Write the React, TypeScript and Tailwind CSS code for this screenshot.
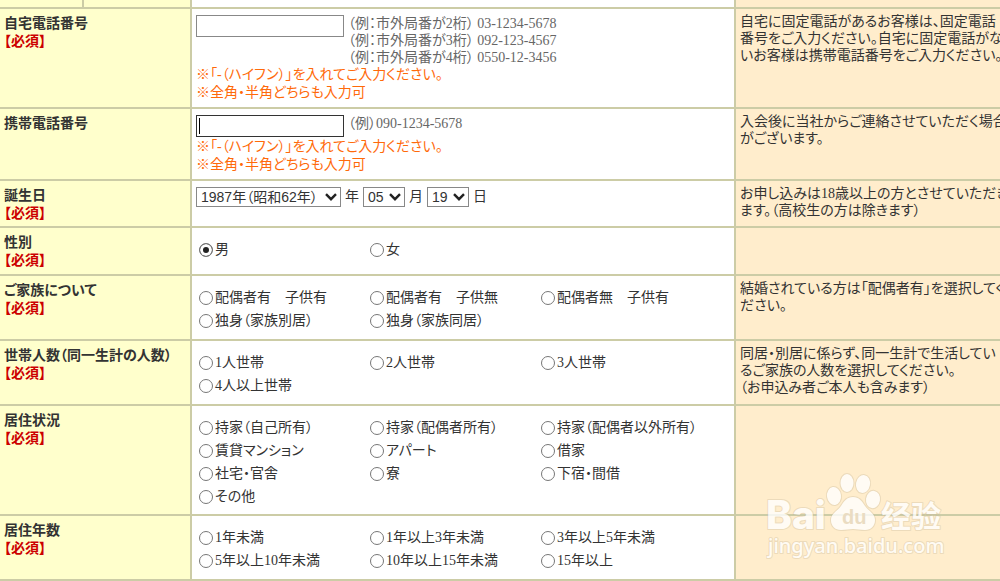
import React from "react";

interface FormRowProps {
  id: string;
  title: string;
  htmlFor?: string;
  required?: boolean;
  height: string;
  note?: string[];
  children: React.ReactNode;
}

interface RadioGroupProps {
  name: string;
  options: string[];
  defaultOption?: string;
}

interface DateSelectProps {
  id: string;
  unit: string;
  value: string;
  width: string;
}

const FAMILY = ["配偶者有　子供有", "配偶者有　子供無", "配偶者無　子供有", "独身（家族別居）", "独身（家族同居）"];

const HOUSEHOLD = ["1人世帯", "2人世帯", "3人世帯", "4人以上世帯"];

const RESIDENCE = [
  "持家（自己所有）",
  "持家（配偶者所有）",
  "持家（配偶者以外所有）",
  "賃貸マンション",
  "アパート",
  "借家",
  "社宅・官舎",
  "寮",
  "下宿・間借",
  "その他",
];

const YEARS = [
  "1年未満",
  "1年以上3年未満",
  "3年以上5年未満",
  "5年以上10年未満",
  "10年以上15年未満",
  "15年以上",
];

const ROW = "grid grid-cols-[192px_minmax(0,1fr)_264px] border-b-2 border-[#cccca6]";

function FormRow({ id, title, htmlFor, required, height, note = [], children }: FormRowProps) {
  return (
    <div className={`${ROW} ${height}`}>
      <div className="border-r-2 border-[#cccca6] bg-[#ffffcc] px-1 pt-1.5 font-bold leading-[18px]">
        <label id={`${id}-label`} htmlFor={htmlFor} className="block">
          {title}
        </label>
        {required && <p className="text-[#cc0000]">【必須】</p>}
      </div>
      <div className="border-r-2 border-[#cccca6] bg-white">{children}</div>
      <div className="overflow-hidden whitespace-nowrap bg-[#ffedcc] px-1 pt-1 leading-[17px]">
        {note.map((line) => (
          <p key={line}>{line}</p>
        ))}
      </div>
    </div>
  );
}

function PhoneHint() {
  return (
    <div className="leading-[18px] text-[#ff6a0a]">
      <p>※「-（ハイフン）」を入れてご入力ください。</p>
      <p>※全角・半角どちらも入力可</p>
    </div>
  );
}

function RadioGroup({ name, options, defaultOption }: RadioGroupProps) {
  return (
    <div
      role="radiogroup"
      aria-labelledby={`${name}-label`}
      className="grid grid-cols-[171px_171px_minmax(0,1fr)] pl-[7px] pt-[10px]"
    >
      {options.map((option) => (
        <label key={option} className="flex h-[23px] items-center gap-0.5 whitespace-nowrap">
          <input
            type="radio"
            name={name}
            defaultChecked={option === defaultOption}
            className="h-3.5 w-3.5 shrink-0 appearance-none rounded-full border border-[#777] bg-white checked:bg-[#222] checked:shadow-[inset_0_0_0_3px_#fff]"
          />
          {option}
        </label>
      ))}
    </div>
  );
}

function DateSelect({ id, unit, value, width }: DateSelectProps) {
  return (
    <>
      <div className={`relative ${width}`}>
        <select
          id={id}
          defaultValue={value}
          className="block h-5 w-full appearance-none border border-[#888] bg-white pl-1 font-['Liberation_Sans','Noto_Sans_CJK_JP',sans-serif] text-sm leading-4"
        >
          <option>{value}</option>
        </select>
        <svg
          viewBox="0 0 12 8"
          className="pointer-events-none absolute right-1 top-1.5 h-2 w-3"
          fill="none"
          stroke="#222"
          strokeWidth="2.4"
        >
          <path d="M1 1.2 6 6.2l5-5" />
        </svg>
      </div>
      <label htmlFor={id}>{unit}</label>
    </>
  );
}

function Watermark() {
  return (
    <svg
      viewBox="0 0 182 92"
      className="pointer-events-none absolute right-[52px] top-[472px] h-[92px] w-[182px]"
      aria-hidden="true"
    >
      <g fill="#fff" stroke="#c4b396" strokeOpacity="0.4" strokeWidth="2" strokeLinejoin="round" paintOrder="stroke" opacity="0.8">
        <text x="0" y="57" fontFamily="Inter, sans-serif" fontWeight="800" fontSize="39">
          Bai
        </text>
        <ellipse cx="68" cy="24" rx="7" ry="9" transform="rotate(-8 68 24)" />
        <ellipse cx="81" cy="11" rx="6.5" ry="9" />
        <ellipse cx="97" cy="12" rx="7" ry="9" transform="rotate(10 97 12)" />
        <ellipse cx="107" cy="27.5" rx="7" ry="8.7" transform="rotate(8 107 27.5)" />
        <path d="M87 25c-6 0-9 4-12 9-3 5-10 7-10 14 0 6 4 10 10 10 5 0 8-1 12-1s7 1 12 1c6 0 10-4 10-10 0-7-7-9-10-14-3-5-6-9-12-9Z" />
        <text x="115" y="55" fontFamily="Noto Sans CJK SC, sans-serif" fontWeight="700" fontSize="30">
          经验
        </text>
        <text x="2" y="81" fontFamily="Noto Sans, sans-serif" fontWeight="500" fontSize="20">
          jingyan.baidu.com
        </text>
      </g>
      <text x="76" y="52" fill="#eadcc2" fontFamily="Liberation Sans, sans-serif" fontWeight="700" fontSize="20">
        du
      </text>
    </svg>
  );
}

export default function App() {
  return (
    <form className="relative overflow-hidden bg-white font-['Liberation_Serif','Noto_Sans_CJK_JP',serif] text-sm text-[#333] [font-feature-settings:'palt']">
      {/* Bottom edge of the row above */}
      <div className={ROW}>
        <div className="grid h-[7px] grid-cols-[84px_1fr] border-r-2 border-[#cccca6] bg-[#ffffcc]">
          <div className="border-r-2 border-[#cccca6]" />
        </div>
        <div className="border-r-2 border-[#cccca6]" />
        <div className="bg-[#ffedcc]" />
      </div>

      <FormRow
        id="home"
        title="自宅電話番号"
        htmlFor="home-phone"
        required
        height="min-h-[100px]"
        note={[
          "自宅に固定電話があるお客様は、固定電話",
          "番号をご入力ください。自宅に固定電話がな",
          "いお客様は携帯電話番号をご入力ください。",
        ]}
      >
        <div className="px-1 pt-1.5">
          <div className="flex items-start gap-1">
            <input id="home-phone" type="text" className="h-[22px] w-[148px] border border-[#888] bg-white px-1" />
            <div className="leading-[17px] text-[#666]">
              <p>（例：市外局番が2桁） 03-1234-5678</p>
              <p>（例：市外局番が3桁） 092-123-4567</p>
              <p>（例：市外局番が4桁） 0550-12-3456</p>
            </div>
          </div>
          <PhoneHint />
        </div>
      </FormRow>

      <FormRow
        id="mobile"
        title="携帯電話番号"
        htmlFor="mobile-phone"
        height="min-h-[72px]"
        note={["入会後に当社からご連絡させていただく場合", "がございます。"]}
      >
        <div className="px-1 pt-1.5">
          <div className="flex h-[23px] items-start gap-1">
            <div className="relative">
              <input
                id="mobile-phone"
                type="text"
                className="block h-[22px] w-[148px] border border-[#333] bg-white px-1"
              />
              <span className="pointer-events-none absolute left-[3px] top-[3px] h-4 w-px bg-black" />
            </div>
            <p className="leading-[18px] text-[#666]">（例）090-1234-5678</p>
          </div>
          <PhoneHint />
        </div>
      </FormRow>

      <FormRow
        id="birthday"
        title="誕生日"
        htmlFor="birth-year"
        required
        height="min-h-[47px]"
        note={["お申し込みは18歳以上の方とさせていただき", "ます。（高校生の方は除きます）"]}
      >
        <div className="flex items-center gap-1 px-1 pt-1.5">
          <DateSelect id="birth-year" unit="年" value="1987年（昭和62年）" width="w-[145px]" />
          <DateSelect id="birth-month" unit="月" value="05" width="w-[42px]" />
          <DateSelect id="birth-day" unit="日" value="19" width="w-[42px]" />
        </div>
      </FormRow>

      <FormRow id="gender" title="性別" required height="min-h-[48px]">
        <RadioGroup name="gender" options={["男", "女"]} defaultOption="男" />
      </FormRow>

      <FormRow
        id="family"
        title="ご家族について"
        required
        height="min-h-[65px]"
        note={["結婚されている方は「配偶者有」を選択してく", "ださい。"]}
      >
        <RadioGroup name="family" options={FAMILY} />
      </FormRow>

      <FormRow
        id="household"
        title="世帯人数（同一生計の人数）"
        required
        height="min-h-[65px]"
        note={[
          "同居・別居に係らず、同一生計で生活してい",
          "るご家族の人数を選択してください。",
          "（お申込み者ご本人も含みます）",
        ]}
      >
        <RadioGroup name="household" options={HOUSEHOLD} />
      </FormRow>

      <FormRow id="residence" title="居住状況" required height="min-h-[110px]">
        <RadioGroup name="residence" options={RESIDENCE} />
      </FormRow>

      <FormRow id="years" title="居住年数" required height="min-h-[65px]">
        <RadioGroup name="years" options={YEARS} />
      </FormRow>

      <Watermark />
    </form>
  );
}
